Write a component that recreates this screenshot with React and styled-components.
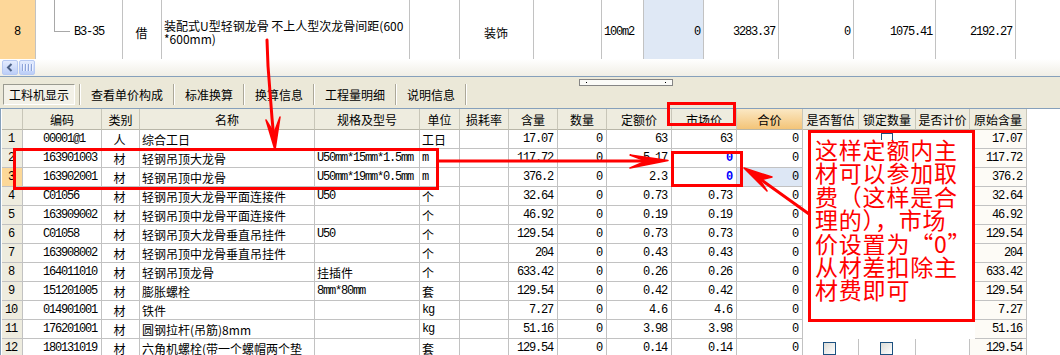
import React from 'react'
import styled, { createGlobalStyle } from 'styled-components'

const CJK = '"Noto Sans CJK SC", "Noto Sans", sans-serif'
const MONO = '"Liberation Mono", "Noto Sans CJK SC", monospace'
const LINE = '#c2c2c2'
const RED = '#ff0000'

const GlobalStyle = createGlobalStyle`
  html, body {
    margin: 0;
    padding: 0;
    background: #fff;
  }
`

const Page = styled.div`
  position: relative;
  width: 1060px;
  height: 355px;
  overflow: hidden;
  background: #fff;
  color: #000;
  font-family: ${CJK};
  font-size: 12px;
`

const justify = (a) => (a === 'right' ? 'flex-end' : a === 'center' ? 'center' : 'flex-start')

/* upper grid (one row visible) */
const TopRow = styled.div`
  display: grid;
  grid-template-columns: 36px 87px 39px 248px 50px 74px 68px 42px 60px 75px 75px 82px 80px 1fr;
  height: 59px;
`

const TopCell = styled.div`
  box-sizing: border-box;
  display: flex;
  align-items: center;
  justify-content: ${(p) => justify(p.$align)};
  padding: 5px 3px 0 2px;
  border-right: ${(p) => (p.$last ? 'none' : `1px solid ${LINE}`)};
  background: ${(p) => p.$bg || '#fff'};
  font-family: ${(p) => (p.$mono ? MONO : CJK)};
  letter-spacing: ${(p) => (p.$mono ? '-1.2px' : '0')};
  white-space: nowrap;
  overflow: hidden;
`

const Elbow = styled.span`
  align-self: flex-start;
  flex-shrink: 0;
  box-sizing: border-box;
  width: 16px;
  height: 32px;
  margin: -5px 4px 0 16px;
  border-left: 1px solid #a8a8a8;
  border-bottom: 1px solid #a8a8a8;
`

const NameText = styled.div`
  line-height: 13px;
`

/* horizontal scrollbar */
const HScroll = styled.div`
  height: 17px;
  display: flex;
  align-items: center;
  gap: 1px;
  padding-left: 2px;
  background: linear-gradient(#ffffff, #f0eee5);
`

const ScrollBtn = styled.div`
  box-sizing: border-box;
  width: 16px;
  height: 15px;
  display: flex;
  align-items: center;
  justify-content: center;
  gap: 1px;
  border: 1px solid #b7c9f2;
  border-radius: 2px;
  background: linear-gradient(#e4ecfe, #bccef8);
`

const GripLine = styled.span`
  width: 1px;
  height: 7px;
  background: #8ea4d8;
  box-shadow: 1px 0 0 #eef3ff;
  margin-right: 1px;
`

/* splitter + tabs */
const Toolbar = styled.div`
  box-sizing: border-box;
  height: 33px;
  border-top: 1px solid #86a0bb;
  border-bottom: 1px solid #86a0bb;
  background: #ebe8d8;
  display: flex;
  flex-direction: column;
`

const Grip = styled.div`
  box-sizing: border-box;
  width: 94px;
  height: 7px;
  margin: 2px 0 0 579px;
  padding: 0 6px;
  display: flex;
  align-items: center;
  justify-content: space-between;
  border: 1px solid #858585;
  background: #fbfbf8;
`

const GripDot = styled.span`
  width: 1px;
  height: 1px;
  background: #000;
`

const Tabs = styled.div`
  display: flex;
  align-items: center;
  height: 21px;
  margin-top: -2px;
  padding-left: 3px;
`

const Tab = styled.div`
  box-sizing: border-box;
  height: 21px;
  display: flex;
  align-items: center;
  padding: ${(p) => (p.$active ? '0 5px' : '0 10px')};
  margin-right: ${(p) => (p.$active ? '4px' : '0')};
  border: ${(p) => (p.$active ? '1px solid' : 'none')};
  border-color: #9a9a90 #ffffff #ffffff #9a9a90;
  background: ${(p) => (p.$active ? '#f3f1e8' : 'transparent')};
  white-space: nowrap;
`

const TabSep = styled.span`
  box-sizing: border-box;
  width: 2px;
  height: 21px;
  border-left: 1px solid #aca899;
  border-right: 1px solid #ffffff;
`

/* lower grid */
const Grid = styled.div`
  border-left: 1px solid #86a0bb;
  padding-left: 1px;
`

const GridRow = styled.div`
  display: grid;
  grid-template-columns: 21px 79px 38px 175px 105px 40px 49px 49px 49px 65px 65px 66px 56px 57px 54px 57px;
  height: ${(p) => (p.$header ? 21 : 19)}px;
`

const HeadCell = styled.div`
  box-sizing: border-box;
  display: flex;
  align-items: center;
  justify-content: center;
  border-right: 1px solid #c8c6b8;
  border-bottom: 1px solid #b8b6a8;
  background: ${(p) => (p.$sorted ? 'linear-gradient(#fbe8c4, #f3c478)' : '#eeecdf')};
  white-space: nowrap;
`

const Cell = styled.div`
  box-sizing: border-box;
  display: flex;
  align-items: center;
  justify-content: ${(p) => justify(p.$align)};
  padding: 0 4px 0 ${(p) => p.$padLeft ?? 2}px;
  border-right: 1px solid ${LINE};
  border-bottom: 1px solid ${LINE};
  background: ${(p) => p.$bg || '#fff'};
  color: ${(p) => (p.$blue ? '#0000ff' : '#000')};
  font-weight: ${(p) => (p.$blue ? 'bold' : 'normal')};
  font-family: ${(p) => (p.$mono ? MONO : CJK)};
  letter-spacing: ${(p) => (p.$mono ? '-1.2px' : '0')};
  white-space: nowrap;
  overflow: hidden;
`

const Check = styled.span`
  box-sizing: border-box;
  width: 13px;
  height: 13px;
  border: 1px solid #1c5180;
  background: linear-gradient(135deg, #dcdcd7, #ffffff);
`

/* annotations drawn over the screenshot */
const RedBox = styled.div`
  position: absolute;
  box-sizing: border-box;
  border: 3px solid ${RED};
`

const WhiteOut = styled.div`
  position: absolute;
  left: 803px;
  top: 130px;
  width: 172px;
  height: 209px;
  background: #fff;
`

const Note = styled.div`
  position: absolute;
  left: 808px;
  top: 130px;
  width: 167px;
  height: 192px;
  box-sizing: border-box;
  padding: 5px 0 0 4px;
  border: 3px solid ${RED};
  background: #fff;
  color: ${RED};
  font-family: ${CJK};
  font-size: 23px;
  letter-spacing: 0.8px;
  line-height: 23.4px;
`

const NoteLine = styled.div`
  white-space: nowrap;
`

const PeekCheck = styled.span`
  position: absolute;
  left: 70px;
  top: 0;
  width: 12px;
  height: 7px;
  box-sizing: border-box;
  border: 1px solid #1c5180;
  border-bottom: none;
`

const ArrowLayer = styled.svg`
  position: absolute;
  left: 0;
  top: 0;
  pointer-events: none;
`

const cols = [
  { title: '', align: 'center' },
  { title: '编码', align: 'left', pad: 20 },
  { title: '类别', align: 'center' },
  { title: '名称', align: 'left' },
  { title: '规格及型号', align: 'left' },
  { title: '单位', align: 'left' },
  { title: '损耗率', align: 'right' },
  { title: '含量', align: 'right' },
  { title: '数量', align: 'right' },
  { title: '定额价', align: 'right' },
  { title: '市场价', align: 'right' },
  { title: '合价', align: 'right', sorted: true },
  { title: '是否暂估', align: 'center' },
  { title: '锁定数量', align: 'center' },
  { title: '是否计价', align: 'center' },
  { title: '原始含量', align: 'right' },
]

const rows = [
  ['1', '00001@1', '人', '综合工日', '', '工日', '', '17.07', '0', '63', '63', '0', '', '', '', '17.07'],
  ['2', '163901003', '材', '轻钢吊顶大龙骨', 'U50mm*15mm*1.5mm', 'm', '', '117.72', '0', '5.17', '0', '0', '', '', '', '117.72'],
  ['3', '163902001', '材', '轻钢吊顶中龙骨', 'U50mm*19mm*0.5mm', 'm', '', '376.2', '0', '2.3', '0', '0', '', '', '', '376.2'],
  ['4', 'C01056', '材', '轻钢吊顶大龙骨平面连接件', 'U50', '个', '', '32.64', '0', '0.73', '0.73', '0', '', '', '', '32.64'],
  ['5', '163909002', '材', '轻钢吊顶中龙骨平面连接件', '', '个', '', '46.92', '0', '0.19', '0.19', '0', '', '', '', '46.92'],
  ['6', 'C01058', '材', '轻钢吊顶大龙骨垂直吊挂件', 'U50', '个', '', '129.54', '0', '0.73', '0.73', '0', '', '', '', '129.54'],
  ['7', '163908002', '材', '轻钢吊顶中龙骨垂直吊挂件', '', '个', '', '204', '0', '0.43', '0.43', '0', '', '', '', '204'],
  ['8', '164011010', '材', '轻钢吊顶龙骨', '挂插件', '个', '', '633.42', '0', '0.26', '0.26', '0', '', '', '', '633.42'],
  ['9', '151201005', '材', '膨胀螺栓', '8mm*80mm', '套', '', '129.54', '0', '0.42', '0.42', '0', '', '', '', '129.54'],
  ['10', '014901001', '材', '铁件', '', 'kg', '', '7.27', '0', '4.6', '4.6', '0', '', '', '', '7.27'],
  ['11', '176201001', '材', '圆钢拉杆(吊筋)8mm', '', 'kg', '', '51.16', '0', '3.98', '3.98', '0', '', '', '', '51.16'],
  ['12', '180131019', '材', '六角机螺栓(带一个螺帽两个垫', '', '套', '', '129.54', '0', '0.14', '0.14', '0', 'check', 'check', '', '129.54'],
]

const tabs = ['查看单价构成', '标准换算', '换算信息', '工程量明细', '说明信息']

const noteLines = ['这样定额内主', '材可以参加取', '费（这样是合', '理的），市场', '价设置为“0”', '从材差扣除主', '材费即可']

const hasCJK = (s) => /[^\x00-\x7f]/.test(s)

function cellBg(r, c) {
  if (c === 0) return r === 2 ? '#fcd898' : '#eeecdf'
  if (r === 2 && c === 11) return '#dde7f5'
  if (c === 15) return '#fdfbf6'
  return '#fff'
}

function renderCell(value, r, c) {
  const col = cols[c]
  const blue = c === 10 && (r === 1 || r === 2)
  return (
    <Cell
      key={c}
      $align={col.align}
      $padLeft={col.pad}
      $bg={cellBg(r, c)}
      $mono={!hasCJK(value)}
      $blue={blue}
    >
      {value === 'check' ? <Check /> : value}
    </Cell>
  )
}

export default function App() {
  return (
    <Page>
      <GlobalStyle />

      <TopRow>
        <TopCell $align="center" $bg="#fdd799" $mono>8</TopCell>
        <TopCell $mono>
          <Elbow />
          <span>B3-35</span>
        </TopCell>
        <TopCell $align="center">借</TopCell>
        <TopCell>
          <NameText>
            装配式U型轻钢龙骨 不上人型次龙骨间距(600
            <br />
            *600mm)
          </NameText>
        </TopCell>
        <TopCell />
        <TopCell $align="center">装饰</TopCell>
        <TopCell />
        <TopCell $mono>100m2</TopCell>
        <TopCell $align="right" $bg="#dfe8f5" $mono>0</TopCell>
        <TopCell $align="right" $mono>3283.37</TopCell>
        <TopCell $align="right" $mono>0</TopCell>
        <TopCell $align="right" $mono>1075.41</TopCell>
        <TopCell $align="right" $mono>2192.27</TopCell>
        <TopCell $last />
      </TopRow>

      <HScroll>
        <ScrollBtn>
          <svg width="8" height="9" viewBox="0 0 8 9">
            <polyline points="5.5,1 2,4.5 5.5,8" fill="none" stroke="#4d6185" strokeWidth="2" />
          </svg>
        </ScrollBtn>
        <ScrollBtn>
          <GripLine />
          <GripLine />
          <GripLine />
          <GripLine />
        </ScrollBtn>
      </HScroll>

      <Toolbar>
        <Grip>
          <GripDot />
          <GripDot />
        </Grip>
        <Tabs>
          <Tab $active>工料机显示</Tab>
          <TabSep />
          {tabs.map((t) => (
            <React.Fragment key={t}>
              <Tab>{t}</Tab>
              <TabSep />
            </React.Fragment>
          ))}
        </Tabs>
      </Toolbar>

      <Grid>
        <GridRow $header>
          {cols.map((c, i) => (
            <HeadCell key={i} $sorted={c.sorted}>{c.title}</HeadCell>
          ))}
        </GridRow>
        {rows.map((row, r) => (
          <GridRow key={r}>{row.map((v, c) => renderCell(v, r, c))}</GridRow>
        ))}
      </Grid>

      <RedBox style={{ left: 13, top: 148, width: 426, height: 42 }} />
      <RedBox style={{ left: 667, top: 102, width: 69, height: 24 }} />
      <RedBox style={{ left: 671, top: 151, width: 72, height: 36 }} />

      <WhiteOut />
      <Note>
        <PeekCheck />
        {noteLines.map((l) => (
          <NoteLine key={l}>{l}</NoteLine>
        ))}
      </Note>

      <ArrowLayer width="1060" height="355" viewBox="0 0 1060 355">
        <g stroke={RED} strokeWidth="3" fill="none" strokeLinecap="round" strokeLinejoin="round">
          <polyline points="267,40 268,66 270,92 272,118 274,140" />
          <polyline points="439,161 650,161" />
          <polyline points="809,214 756,176" />
        </g>
        <g fill={RED} stroke={RED} strokeWidth="1.5" strokeLinejoin="round">
          <polygon points="266,120 275,150 280,117 274,133" />
          <polygon points="630,155 668,160.5 630,168 646,161" />
          <polygon points="744,168 772,177 760,180 767,191" />
        </g>
      </ArrowLayer>
    </Page>
  )
}
